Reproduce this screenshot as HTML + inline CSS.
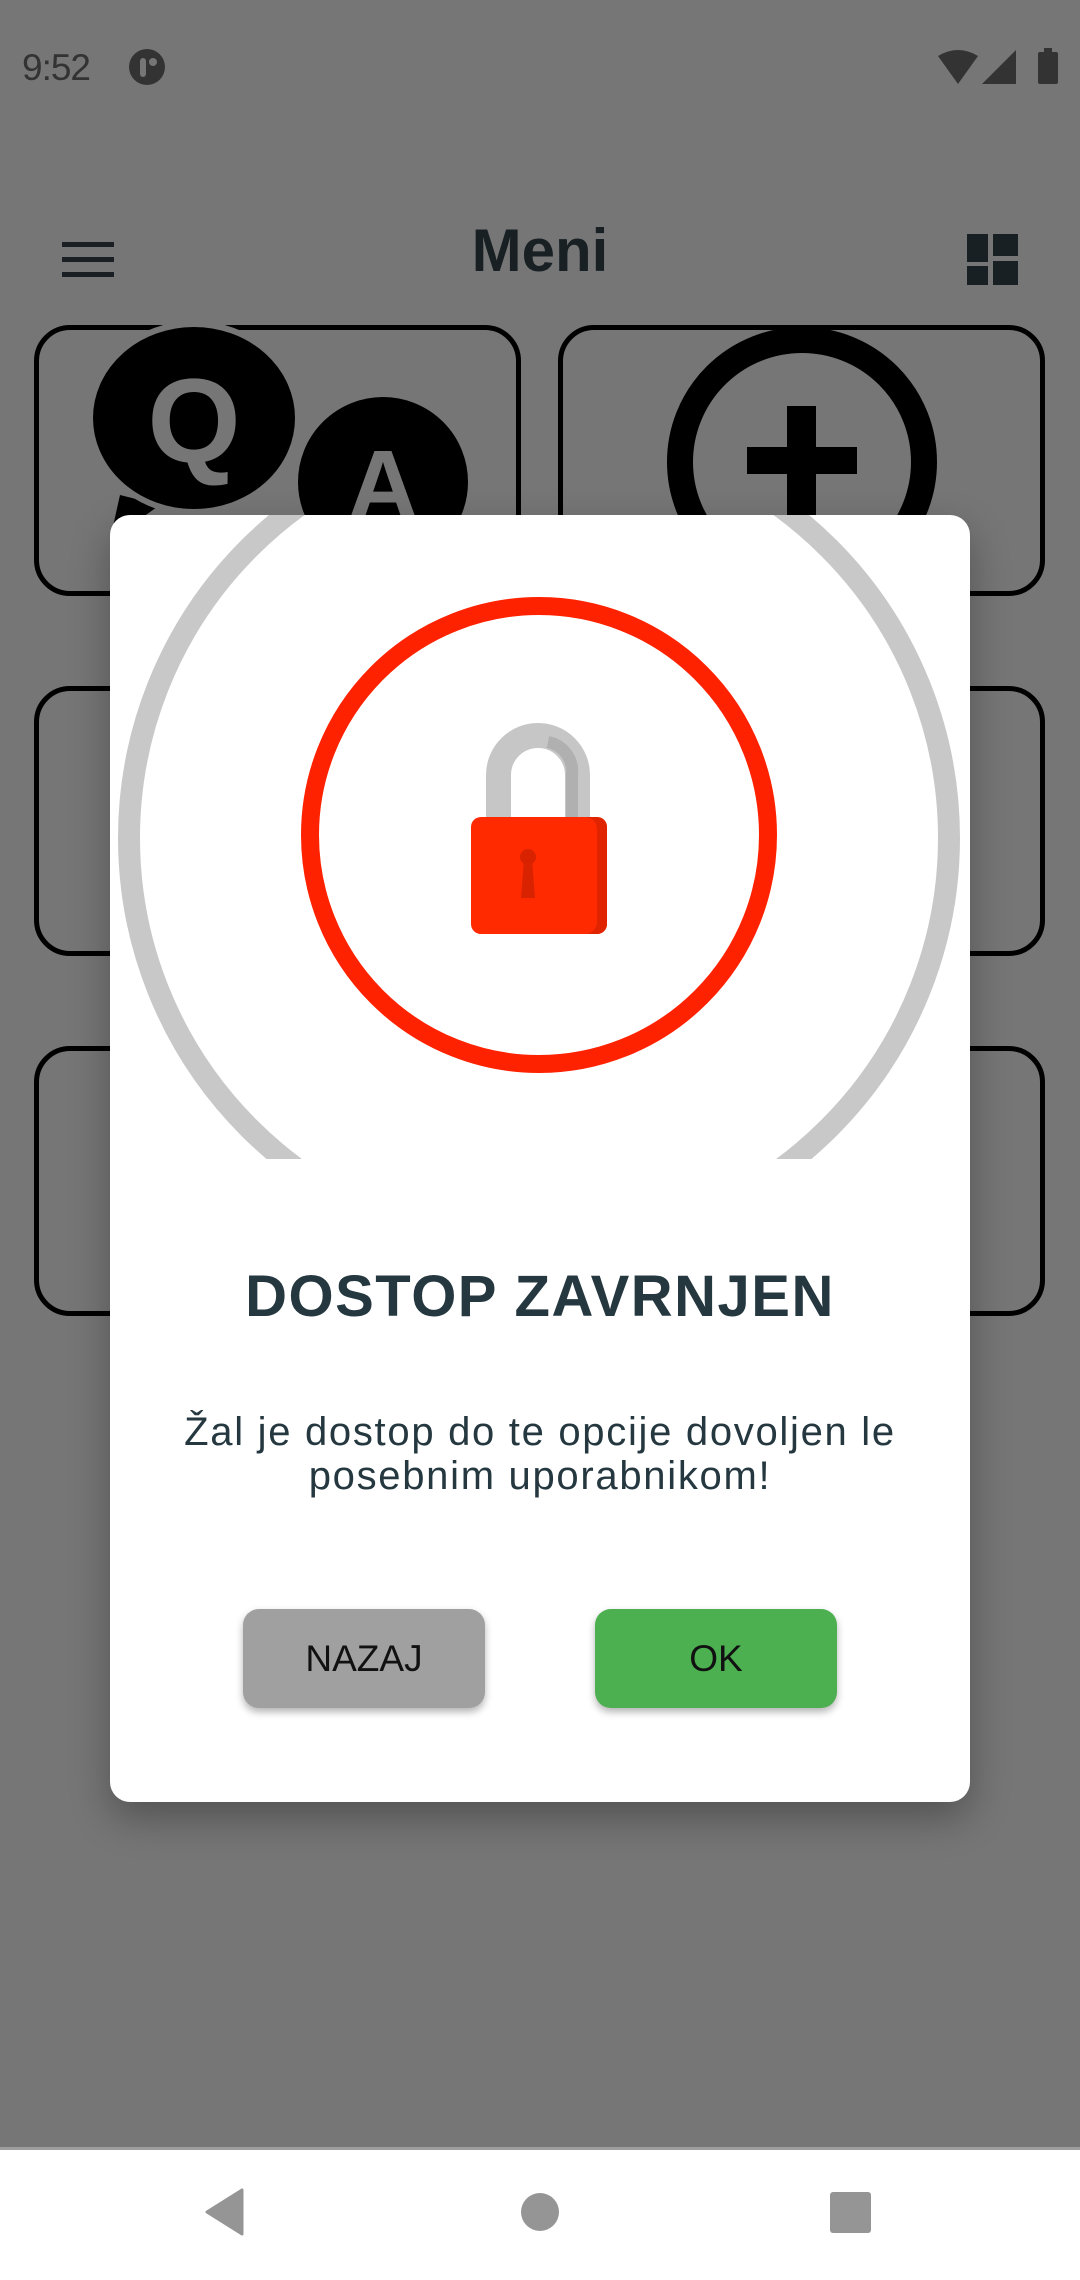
<!DOCTYPE html>
<html><head><meta charset="utf-8">
<style>
*{margin:0;padding:0;box-sizing:border-box}
html,body{width:1080px;height:2280px;overflow:hidden;background:#767676;font-family:"Liberation Sans",sans-serif}
.abs{position:absolute}
.card{position:absolute;border:5px solid #000;border-radius:36px}
</style></head><body>
<!-- status bar -->
<div class="abs" style="left:22px;top:47px;font-size:37px;color:#333;letter-spacing:-1px">9:52</div>
<svg class="abs" style="left:128px;top:49px" width="38" height="36" viewBox="0 0 38 36"><ellipse cx="19" cy="18" rx="18" ry="18" fill="#333"/><rect x="12" y="9" width="6" height="19" rx="3" fill="#767676"/><circle cx="25" cy="13" r="4" fill="#767676"/></svg>
<svg class="abs" style="left:936px;top:48px" width="124" height="38" viewBox="0 0 124 38"><path d="M2 8 Q22 -4 42 8 L22 36 Z" fill="#333"/><path d="M80 2 L80 36 L46 36 Z" fill="#333"/><rect x="102" y="4" width="20" height="32" rx="2" fill="#333"/><rect x="108" y="0" width="8" height="5" fill="#333"/></svg>
<!-- header -->
<div class="abs" style="left:62px;top:242px;width:52px;height:5px;background:#1a1f23"></div>
<div class="abs" style="left:62px;top:257px;width:52px;height:5px;background:#1a1f23"></div>
<div class="abs" style="left:62px;top:272px;width:52px;height:5px;background:#1a1f23"></div>
<div class="abs" style="left:0;width:1080px;top:216px;text-align:center;font-size:60px;font-weight:bold;color:#182024">Meni</div>
<svg class="abs" style="left:967px;top:234px" width="51" height="51" viewBox="0 0 51 51"><rect x="0" y="0" width="21" height="51" fill="#182024"/><rect x="26" y="0" width="25" height="22" fill="#182024"/><rect x="26" y="27" width="25" height="24" fill="#182024"/><rect x="0" y="28" width="21" height="4" fill="#767676"/></svg>
<!-- cards -->
<div class="card" style="left:34px;top:325px;width:487px;height:271px"></div>
<div class="card" style="left:558px;top:325px;width:487px;height:271px"></div>
<div class="card" style="left:34px;top:686px;width:487px;height:270px"></div>
<div class="card" style="left:558px;top:686px;width:487px;height:270px"></div>
<div class="card" style="left:34px;top:1046px;width:487px;height:270px"></div>
<div class="card" style="left:558px;top:1046px;width:487px;height:270px"></div>
<svg class="abs" style="left:0;top:0" width="1080" height="600">
 <circle cx="383" cy="482" r="88" fill="#000" stroke="#767676" stroke-width="6"/>
 <text x="383" y="520" font-family="Liberation Sans" font-weight="bold" font-size="100" fill="#767676" text-anchor="middle">A</text>
 <path d="M120 495 L110 540 L160 505 Z" fill="#000"/>
 <ellipse cx="194" cy="418" rx="104" ry="94" fill="#000" stroke="#767676" stroke-width="6"/>
 <text x="194" y="462" font-family="Liberation Sans" font-weight="bold" font-size="120" fill="#767676" text-anchor="middle">Q</text>
 <circle cx="802" cy="462" r="122" fill="none" stroke="#000" stroke-width="26"/>
 <rect x="747" y="447" width="110" height="27" fill="#000"/>
 <rect x="787" y="406" width="29" height="110" fill="#000"/>
</svg>
<!-- dialog -->
<div class="abs" style="left:110px;top:515px;width:860px;height:1287px;background:#fff;border-radius:20px;box-shadow:0 16px 40px rgba(0,0,0,.3);overflow:hidden">
 <svg class="abs" style="left:0;top:0" width="860" height="644" viewBox="110 515 860 644">
  <circle cx="539" cy="838" r="410" fill="none" stroke="#c8c8c8" stroke-width="22"/>
  <circle cx="539" cy="835" r="229" fill="none" stroke="#ff2200" stroke-width="18"/>
  <path d="M498.5 820 L498.5 775 A39.5 39.5 0 0 1 577.5 775 L577.5 820" fill="none" stroke="#c6c6c6" stroke-width="25"/>
  <path d="M548 742 A30 30 0 0 1 572 775 L572 820" fill="none" stroke="#b0b0b0" stroke-width="12"/>
  <rect x="471" y="817" width="136" height="117" rx="10" fill="#ff2a00"/>
  <path d="M585 817 L597 817 A10 10 0 0 1 607 827 L607 924 A10 10 0 0 1 597 934 L585 934 A12 12 0 0 0 597 922 L597 829 A12 12 0 0 0 585 817Z" fill="#e02400"/>
  <circle cx="528" cy="857" r="8" fill="#d82200"/>
  <path d="M524 860 L532 860 L535 898 L521 898 Z" fill="#d82200"/>
 </svg>
 <div class="abs" style="left:0;width:860px;top:748px;text-align:center;font-size:58px;font-weight:bold;color:#253840;letter-spacing:1.5px">DOSTOP ZAVRNJEN</div>
 <div class="abs" style="left:-30px;width:920px;top:895px;text-align:center;font-size:40px;line-height:44px;color:#253840;letter-spacing:1.7px">Žal je dostop do te opcije dovoljen le<br>posebnim uporabnikom!</div>
 <div class="abs" style="left:133px;top:1094px;width:242px;height:99px;background:#a0a0a0;border-radius:16px;box-shadow:0 4px 8px rgba(0,0,0,.3);text-align:center;line-height:99px;font-size:37px;color:#111">NAZAJ</div>
 <div class="abs" style="left:485px;top:1094px;width:242px;height:99px;background:#4caf50;border-radius:16px;box-shadow:0 4px 8px rgba(0,0,0,.3);text-align:center;line-height:99px;font-size:37px;color:#111">OK</div>
</div>
<!-- nav bar -->
<div class="abs" style="left:0;top:2147px;width:1080px;height:3px;background:#9e9e9e"></div>
<div class="abs" style="left:0;top:2150px;width:1080px;height:130px;background:#fff"></div>
<svg class="abs" style="left:0;top:2150px" width="1080" height="130">
 <path d="M242 40 L242 84 L207 62 Z" fill="#959595" stroke="#959595" stroke-width="3" stroke-linejoin="round"/>
 <circle cx="540" cy="62" r="19" fill="#959595"/>
 <rect x="830" y="42" width="41" height="41" rx="3" fill="#959595"/>
</svg>
</body></html>
